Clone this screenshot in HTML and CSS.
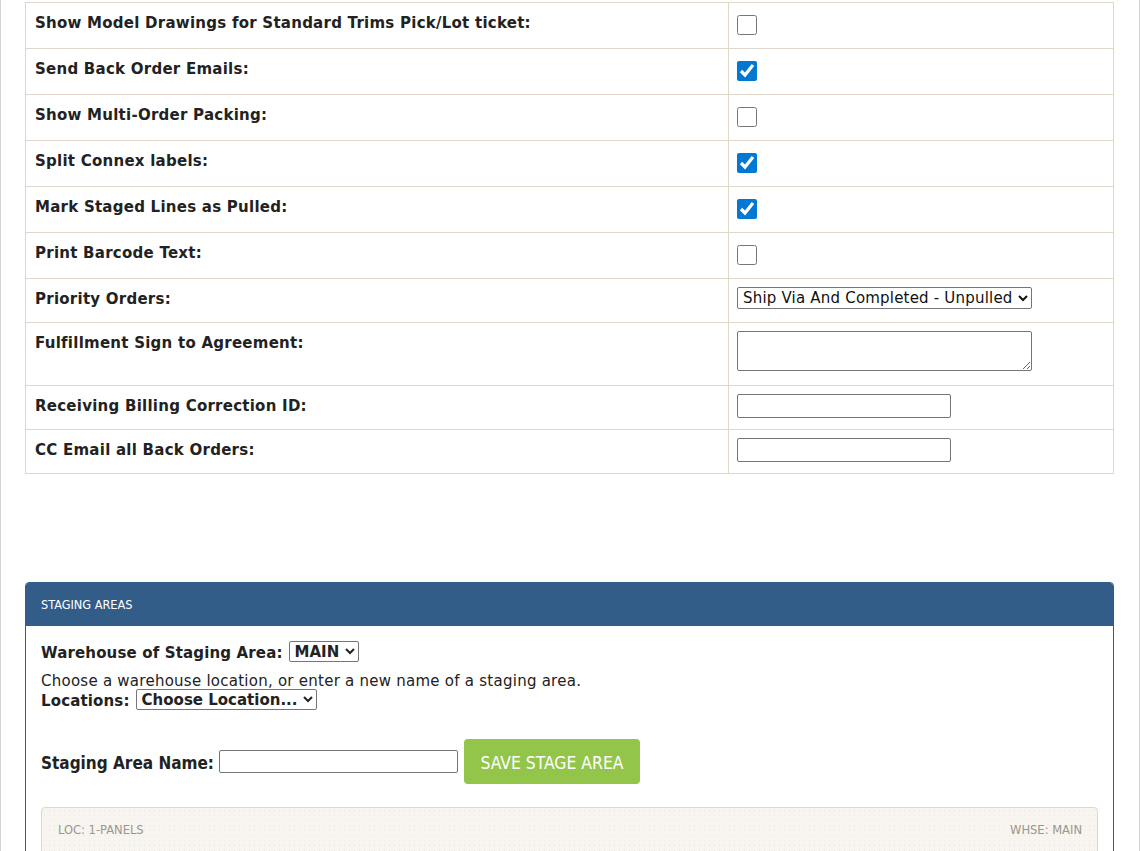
FILE: index.html
```html
<!DOCTYPE html>
<html>
<head>
<meta charset="utf-8">
<title>Settings</title>
<link rel="stylesheet" href="styles.css">
</head>
<body>
<div class="page">
  <div class="settings">
    <div class="row"><div class="label">Show Model Drawings for Standard Trims Pick/Lot ticket:</div><div class="value"><input type="checkbox" class="check"></div></div>
    <div class="row"><div class="label">Send Back Order Emails:</div><div class="value"><input type="checkbox" class="check" checked></div></div>
    <div class="row"><div class="label">Show Multi-Order Packing:</div><div class="value"><input type="checkbox" class="check"></div></div>
    <div class="row"><div class="label">Split Connex labels:</div><div class="value"><input type="checkbox" class="check" checked></div></div>
    <div class="row"><div class="label">Mark Staged Lines as Pulled:</div><div class="value"><input type="checkbox" class="check" checked></div></div>
    <div class="row"><div class="label">Print Barcode Text:</div><div class="value"><input type="checkbox" class="check"></div></div>
    <div class="row row-sm"><div class="label">Priority Orders:</div><div class="value"><select class="sel-wide"><option>Ship Via And Completed - Unpulled</option></select></div></div>
    <div class="row row-lg"><div class="label">Fulfillment Sign to Agreement:</div><div class="value"><textarea class="area"></textarea></div></div>
    <div class="row row-sm"><div class="label">Receiving Billing Correction ID:</div><div class="value"><input type="text" class="text"></div></div>
    <div class="row row-sm"><div class="label">CC Email all Back Orders:</div><div class="value"><input type="text" class="text"></div></div>
  </div>

  <div class="panel">
    <div class="panel-heading">STAGING AREAS</div>
    <div class="panel-body">
      <div class="field-line">
        <span class="blabel">Warehouse of Staging Area:</span>
        <select class="bsel sel-main"><option>MAIN</option></select>
      </div>
      <div class="hint">Choose a warehouse location, or enter a new name of a staging area.</div>
      <div class="field-line">
        <span class="blabel">Locations:</span>
        <select class="bsel sel-loc"><option>Choose Location...</option></select>
      </div>
      <div class="name-line">
        <span class="clabel">Staging Area Name:</span>
        <input type="text" class="name-input">
        <button class="btn-save">SAVE STAGE AREA</button>
      </div>
      <div class="well">
        <span>LOC: 1-PANELS</span>
        <span>WHSE: MAIN</span>
      </div>
    </div>
  </div>
</div>
</body>
</html>
```
FILE: styles.css
```css
* { box-sizing: border-box; }
html, body { margin: 0; padding: 0; background: #fff; }
body {
  font-family: "DejaVu Sans", Verdana, sans-serif;
  color: #222;
  overflow: hidden;
}
.page {
  width: 1140px;
  min-height: 1000px;
  border-left: 1px solid #d4d4d4;
  border-right: 1px solid #d4d4d4;
  padding: 2px 25px 0 24px;
}
.settings {
  border-left: 1px solid #dfd7ca;
  border-right: 1px solid #dfd7ca;
  border-bottom: 1px solid #dfd7ca;
}
.row {
  display: grid;
  grid-template-columns: 702px 1fr;
  height: 46px;
  border-top: 1px solid #dfd7ca;
}
.row-sm { height: 44px; }
.row-lg { height: 63px; }
.label {
  padding: 9px 8px 0 9px;
  font-weight: bold;
  font-size: 15px;
  letter-spacing: 0.25px;
  line-height: 22px;
}
.value {
  border-left: 1px solid #dfd7ca;
  padding: 8px 8px 0 8px;
}
.check {
  display: block;
  width: 20px;
  height: 20px;
  margin: 4px 0 0 0;
  accent-color: #0078d4;
}
.sel-wide {
  display: block;
  width: 295px;
  height: 22px;
  font-family: "DejaVu Sans", Verdana, sans-serif;
  font-size: 15px;
  letter-spacing: 0.2px;
  color: #111;
  border: 1px solid #767676;
  border-radius: 2px;
  background: #fff;
  padding: 0 1px;
}
.area {
  display: block;
  width: 295px;
  height: 40px;
  border: 1px solid #767676;
  border-radius: 2px;
  resize: vertical;
}
.text {
  display: block;
  width: 214px;
  height: 24px;
  border: 1px solid #767676;
  border-radius: 2px;
}

.panel {
  margin-top: 108px;
  border: 1px solid #325d88;
  border-radius: 4px 4px 0 0;
}
.panel-heading {
  background: #325d88;
  color: #fff;
  height: 43px;
  padding: 0 15px;
  display: flex;
  align-items: center;
  font-family: "DejaVu Sans Condensed", "DejaVu Sans", sans-serif;
  font-stretch: condensed;
  font-size: 12.6px;
  border-radius: 3px 3px 0 0;
}
.panel-body {
  padding: 15px 15px 0 15px;
}
.field-line {
  display: flex;
  align-items: center;
  gap: 6px;
  height: 21px;
}
.blabel {
  font-weight: bold;
  font-size: 15px;
  letter-spacing: 0.15px;
  padding-top: 3px;
}
.bsel {
  height: 21px;
  font-family: "DejaVu Sans", Verdana, sans-serif;
  font-weight: bold;
  font-size: 15px;
  color: #222;
  border: 1px solid #767676;
  border-radius: 2px;
  background: #fff;
  padding: 0 1px;
}
.sel-main { width: 70px; }
.sel-loc { width: 181px; }
.hint {
  margin-top: 7px;
  height: 20px;
  font-size: 15px;
  letter-spacing: 0.25px;
  line-height: 24px;
}
.name-line {
  margin-top: 29px;
  display: flex;
  align-items: center;
  height: 45px;
}
.clabel {
  font-family: "DejaVu Sans Condensed", "DejaVu Sans", sans-serif;
  font-stretch: condensed;
  font-weight: bold;
  font-size: 17px;
  margin-right: 5px;
  padding-top: 3px;
}
.name-input {
  width: 239px;
  height: 23px;
  border: 1px solid #767676;
  border-radius: 2px;
  margin-right: 6px;
}
.btn-save {
  height: 45px;
  width: 176px;
  background: #93c54b;
  color: #fff;
  border: none;
  border-radius: 4px;
  font-family: "DejaVu Sans Condensed", "DejaVu Sans", sans-serif;
  font-stretch: condensed;
  font-size: 17.4px;
  padding: 3px 0 0 0;
}
.well {
  margin-top: 23px;
  border: 1px solid #dfd7ca;
  border-radius: 4px;
  background-color: #f8f5f0;
  background-image: radial-gradient(circle, #ede8df 0.6px, transparent 0.8px);
  background-size: 5px 5px;
  height: 60px;
  padding: 14px 15px 0 16px;
  display: flex;
  justify-content: space-between;
  font-family: "DejaVu Sans Condensed", "DejaVu Sans", sans-serif;
  font-stretch: condensed;
  font-size: 12.8px;
  line-height: 16px;
  color: #98978b;
}
```
